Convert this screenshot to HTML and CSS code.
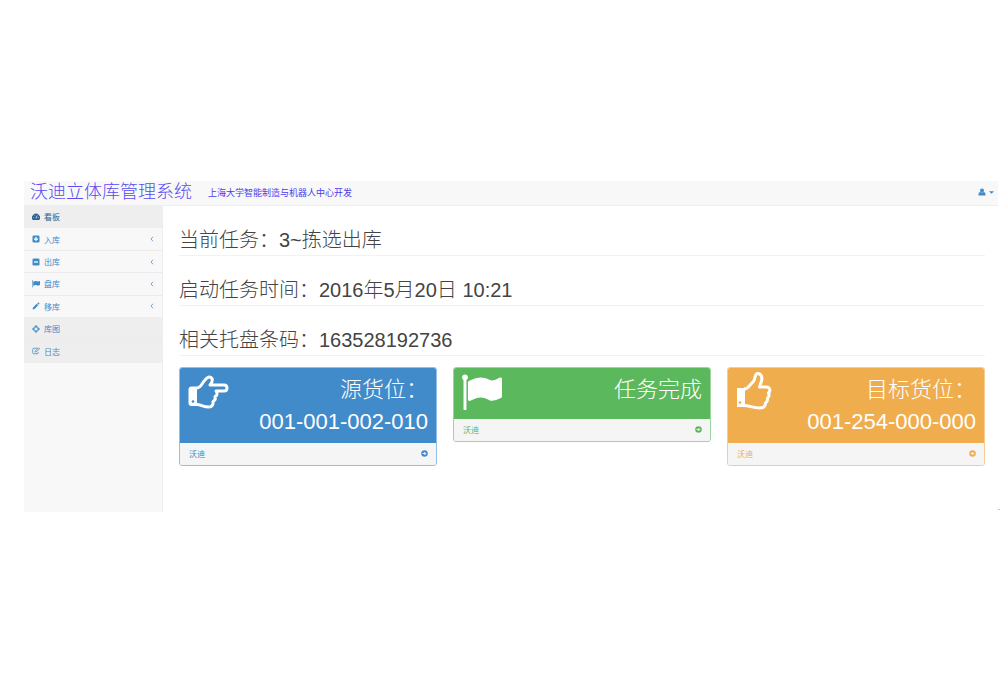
FILE: index.html
```html
<!DOCTYPE html>
<html lang="zh-CN">
    <head>
        <meta charset="utf-8">
        <title>沃迪立体库管理系统</title>
        <link rel="stylesheet" href="styles.css">
    </head>
    <body>
        <!-- Shared icons -->
        <svg class="sprite" aria-hidden="true">
            <symbol id="flag" viewBox="64 110 1728 1600"><path fill="currentColor" d="M320 256q0 72-64 110v1266q0 13-9.500 22.500t-22.500 9.500h-64q-13 0-22.500-9.500t-9.500-22.500v-1266q-64-38-64-110 0-53 37.500-90.500t90.500-37.500 90.500 37.500 37.500 90.500zm1472 64v763q0 25-12.500 38.500t-39.500 27.500q-215 116-369 116-61 0-123.500-22t-108.500-48-115.500-48-142.500-22q-192 0-464 146-17 9-33 9-26 0-45-19t-19-45v-742q0-32 31-55 21-14 79-43 236-120 421-120 107 0 200 29t219 88q38 19 88 19 54 0 117.500-21t110-47 88-47 54.500-21q26 0 45 19t19 45z"/></symbol>
            <symbol id="arrow" viewBox="0 0 16 16"><circle cx="8" cy="8" r="7.500" fill="currentColor"/><path d="M3.500 8h7M7.500 4.500L11 8l-3.500 3.500" fill="none" stroke="#f5f5f5" stroke-width="2.200"/></symbol>
            <symbol id="chevron" viewBox="0 0 8 12"><path d="M6 1.500L2 6l4 4.500" fill="none" stroke="currentColor" stroke-width="1.500"/></symbol>
        </svg>

        <div class="page">
            <header class="navbar">
                <a class="brand" href="#">沃迪立体库管理系统</a>
                <span class="maker">上海大学智能制造与机器人中心开发</span>
                <button class="user" type="button" aria-label="用户">
                    <svg class="icon" viewBox="0 0 16 16" fill="currentColor"><circle cx="8" cy="5" r="4"/><path d="M1 15v-3q0-4 4-4 3 2 6 0 4 0 4 4v3z"/></svg>
                    <svg class="caret" viewBox="0 0 8 4" fill="currentColor"><path d="M0 0h8L4 4z"/></svg>
                </button>
            </header>

            <div class="layout">
                <nav class="sidebar">
                    <ul class="menu">
                        <li><a class="active" href="#">
                            <svg class="icon" viewBox="0 0 16 16"><path fill="currentColor" d="M1.500 14A8 8 0 1 1 14.500 14z"/><path d="M8 11l2-6M3 9h1.500M11.500 9H13M4.500 5l1 1" stroke="#eee" stroke-width="1.500"/></svg>看板</a></li>
                        <li><a href="#">
                            <svg class="icon" viewBox="0 0 16 16"><rect x="1" y="1" width="14" height="14" rx="2.500" fill="currentColor"/><path d="M8 4v8M4 8h8" stroke="#fff" stroke-width="2.500"/></svg>入库
                            <svg class="chevron"><use href="#chevron"/></svg></a></li>
                        <li><a href="#">
                            <svg class="icon" viewBox="0 0 16 16"><rect x="1" y="1" width="14" height="14" rx="2.500" fill="currentColor"/><path d="M4 8h8" stroke="#fff" stroke-width="2.500"/></svg>出库
                            <svg class="chevron"><use href="#chevron"/></svg></a></li>
                        <li><a href="#">
                            <svg class="icon"><use href="#flag"/></svg>盘库
                            <svg class="chevron"><use href="#chevron"/></svg></a></li>
                        <li><a href="#">
                            <svg class="icon" viewBox="0 0 16 16" fill="currentColor"><path d="M1 15l1-4 7.500-7.500 3 3L5 14zM10.500 2.500L12 1q1-.5 2 .5l.5.5q1 1 0 2l-1 1.500z"/></svg>移库
                            <svg class="chevron"><use href="#chevron"/></svg></a></li>
                        <li><a class="shaded" href="#">
                            <svg class="icon" viewBox="0 0 16 16" fill="none" stroke="currentColor" stroke-width="2"><circle cx="8" cy="8" r="5"/><path d="M8 0v6M8 10v6M0 8h6M10 8h6"/></svg>库图</a></li>
                        <li><a class="shaded" href="#">
                            <svg class="icon" viewBox="0 0 16 16" fill="none" stroke="currentColor" stroke-width="1.600"><path d="M11 2.500H3.500q-2 0-2 2v7q0 2 2 2h7q2 0 2-2V10"/><path d="M6.500 10V8L13 1.500 15 3.500 8.500 10z"/></svg>日志</a></li>
                    </ul>
                </nav>

                <main class="content">
                    <h1 class="info">当前任务：3~拣选出库</h1>
                    <h1 class="info">启动任务时间：2016年5月20日 10:21</h1>
                    <h1 class="info">相关托盘条码：163528192736</h1>

                    <div class="panels">
                        <section class="panel blue">
                            <div class="panel-head">
                                <svg class="big" viewBox="0 0 40 36" fill="none" stroke="currentColor" stroke-width="3" stroke-linejoin="round"><path d="M9 13.500c4 0 5-5 8-8 2-2.500 4-4 6-2.500 2.500 2 1 5-1 7.500h14c4 0 4 6 0 6h-8c2 2 1 5-1 5.500 1 2.500 0 4-2 5 .5 3-1 5.500-4 5.500-6 0-8-2.500-12-2.500"/><path d="M9 13.500H3.500q-1.500 0-1.500 1.500v13.500q0 1.500 1.500 1.500H9"/><path d="M2 14h7v16H2z" fill="currentColor" stroke="none"/><circle cx="5" cy="27" r="1.300" fill="#428bca" stroke="none"/></svg>
                                <div class="value">源货位：<br>001-001-002-010</div>
                            </div>
                            <a class="panel-foot" href="#"><span>沃迪</span><svg class="go"><use href="#arrow"/></svg></a>
                        </section>

                        <section class="panel green">
                            <div class="panel-head">
                                <svg class="big"><use href="#flag"/></svg>
                                <div class="value">任务完成</div>
                            </div>
                            <a class="panel-foot" href="#"><span>沃迪</span><svg class="go"><use href="#arrow"/></svg></a>
                        </section>

                        <section class="panel orange">
                            <div class="panel-head">
                                <svg class="big" viewBox="1 3 40 37" fill="none" stroke="currentColor" stroke-width="3" stroke-linejoin="round"><path d="M9 18c5 0 6-5 9-7 3-3 1-8 4.500-8.500 4 0 5 4 4 7.500l-2 6H31c4 0 5 4 2.500 6 1 2 .5 4-1 5 .5 3-.5 4-2 5 0 3-2 5-6 5-7 0-10-2.500-15.500-2.500"/><path d="M2 17h8v19H2z" fill="currentColor" stroke="none"/><circle cx="5" cy="31.500" r="1.300" fill="#f0ad4e" stroke="none"/></svg>
                                <div class="value">目标货位：<br>001-254-000-000</div>
                            </div>
                            <a class="panel-foot" href="#"><span>沃迪</span><svg class="go"><use href="#arrow"/></svg></a>
                        </section>
                    </div>

                    <span class="mark">.</span>
                </main>
            </div>
        </div>
    </body>
</html>
```
FILE: styles.css
```css
* {
    box-sizing: border-box;
}

body {
    margin: 0;
    background: #fff;
    color: #444;
    font-family: "Liberation Sans", "Noto Sans CJK SC", sans-serif;
    font-size: 8px;
}

a {
    color: #428bca;
    text-decoration: none;
}

.sprite {
    display: none;
}

.page {
    padding: 181px 2px 0 24px;
}

/* Top bar */
.navbar {
    display: flex;
    align-items: center;
    height: 25px;
    padding: 0 4px 2px 6px;
    background: #f8f8f8;
    border-bottom: 1px solid #eee;
}

.brand {
    color: #5a4cf0;
    font-size: 18px;
    font-weight: 300;
    line-height: 22px;
}

.maker {
    margin-left: 16px;
    color: #4a3cf0;
    font-size: 9px;
}

.user {
    display: flex;
    align-items: center;
    gap: 3px;
    margin-left: auto;
    padding: 0;
    border: 0;
    background: none;
    color: #428bca;
}

.icon {
    width: 8px;
    height: 8px;
    flex: none;
}

.caret {
    width: 5px;
    height: 3px;
}

/* Sidebar and main area */
.layout {
    display: grid;
    grid-template-columns: 139px 1fr;
    min-height: 306px;
}

.sidebar {
    background: #f8f8f8;
    border-right: 1px solid #eee;
}

.menu {
    display: grid;
    grid-auto-rows: 1fr;
    min-height: 157px;
    margin: 0;
    padding: 0;
    list-style: none;
}

.menu li {
    display: grid;
    border-bottom: 1px solid #ececec;
}

.menu a {
    display: flex;
    align-items: center;
    gap: 4px;
    padding: 0 8px;
}

.menu .active,
.menu .shaded {
    background: #eee;
}

.menu .active {
    color: #2a6496;
}

.chevron {
    width: 4px;
    height: 6px;
    margin-left: auto;
}

.content {
    display: flex;
    flex-direction: column;
    padding: 0 13px 0 16px;
}

.info {
    margin: 0;
    padding-top: 19px;
    border-bottom: 1px solid #f2f2f2;
    font-size: 20px;
    font-weight: 300;
    line-height: 30px;
}

/* Status panels */
.panels {
    display: grid;
    grid-template-columns: repeat(3, 1fr);
    align-items: start;
    gap: 16px;
    margin-top: 11px;
}

.panel {
    border: 1px solid;
    border-radius: 3px;
    overflow: hidden;
}

.panel-head {
    display: flex;
    justify-content: space-between;
    align-items: flex-start;
    min-height: 51px;
    padding: 6px 8px 5px;
    color: #fff;
}

.big {
    width: 40px;
    height: 37px;
    overflow: visible;
}

.value {
    font-size: 22px;
    font-weight: 300;
    line-height: 32px;
    text-align: right;
}

.panel-foot {
    display: flex;
    justify-content: space-between;
    align-items: center;
    height: 22px;
    padding: 0 8px 2px 9px;
    background: #f5f5f5;
    color: inherit;
}

.go {
    width: 7px;
    height: 7px;
}

.blue {
    border-color: #94bfe4;
    color: #428bca;
}

.blue .panel-head {
    background: #428bca;
}

.green {
    border-color: #9dd69d;
    color: #5cb85c;
}

.green .panel-head {
    background: #5cb85c;
}

.orange {
    border-color: #f5cd94;
    color: #f0ad4e;
}

.orange .panel-head {
    background: #f0ad4e;
}

/* Sits in the bottom corner, past the content padding */
.mark {
    align-self: flex-end;
    margin-top: auto;
    margin-right: -15px;
}
```
